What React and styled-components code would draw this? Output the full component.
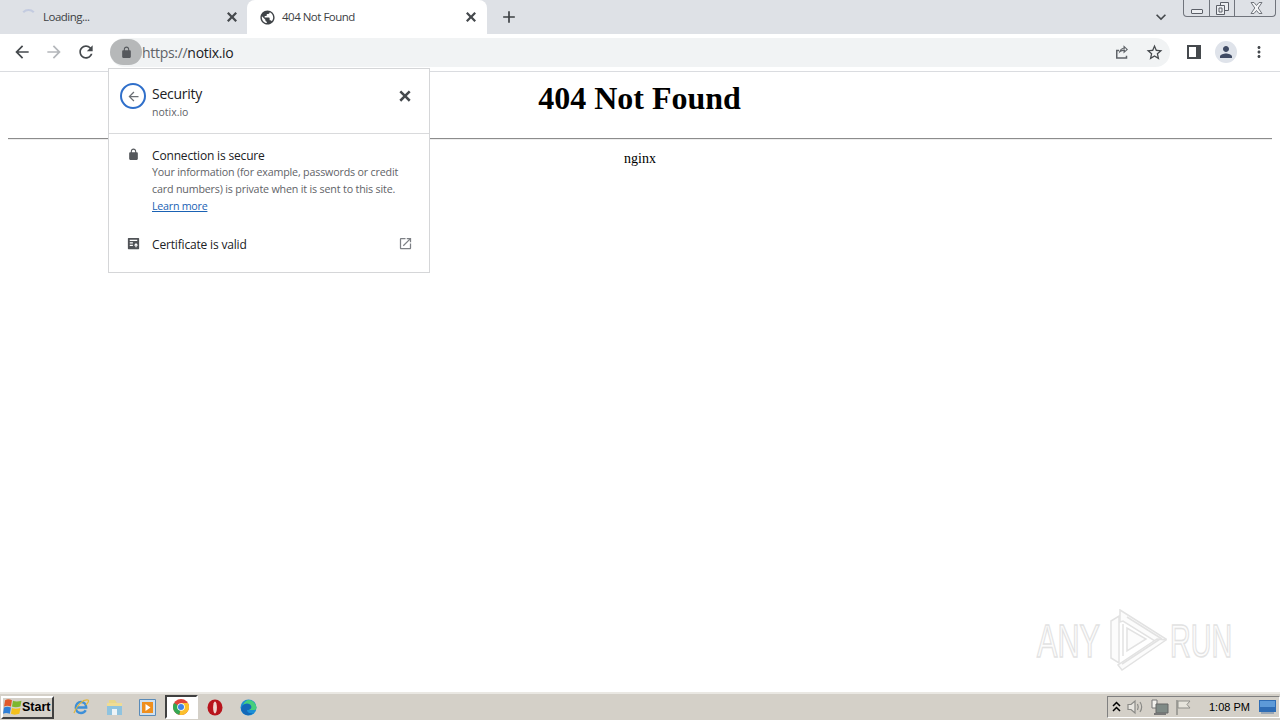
import React from 'react';
import styled, { createGlobalStyle } from 'styled-components';

const GlobalStyle = createGlobalStyle`
  html, body { margin: 0; padding: 0; height: 100%; background: #fff; overflow: hidden; }
  * { box-sizing: border-box; }
`;

const UI_FONT = `"Open Sans", "Noto Sans", sans-serif`;

const paths = {
  back: 'M20 11H7.83l5.59-5.59L12 4l-8 8 8 8 1.41-1.41L7.83 13H20v-2z',
  forward: 'M4 11h12.17l-5.59-5.59L12 4l8 8-8 8-1.41-1.41L16.17 13H4v-2z',
  reload: 'M17.65 6.35C16.2 4.9 14.21 4 12 4c-4.42 0-7.99 3.58-7.99 8s3.57 8 7.99 8c3.73 0 6.84-2.55 7.73-6h-2.08c-.82 2.33-3.04 4-5.65 4-3.31 0-6-2.69-6-6s2.69-6 6-6c1.66 0 3.14.69 4.22 1.78L13 11h7V4l-2.35 2.35z',
  close: 'M19.500 6.910 17.090 4.500 12 9.590 6.910 4.500 4.500 6.910 9.590 12 4.500 17.090 6.910 19.500 12 14.410 17.090 19.500 19.500 17.090 14.410 12z',
  plus: 'M19 13h-6v6h-2v-6H5v-2h6V5h2v6h6v2z',
  chevron: 'M7.41 8.59 12 13.17l4.59-4.58L18 10l-6 6-6-6z',
  lock: 'M18 8h-1V6c0-2.76-2.24-5-5-5S7 3.24 7 6v2H6c-1.1 0-2 .9-2 2v10c0 1.1.9 2 2 2h12c1.1 0 2-.9 2-2V10c0-1.1-.9-2-2-2zM9 6c0-1.66 1.34-3 3-3s3 1.34 3 3v2H9V6z',
  globe: 'M12 2C6.48 2 2 6.48 2 12s4.48 10 10 10 10-4.48 10-10S17.52 2 12 2zm-1 17.93c-3.95-.49-7-3.85-7-7.93 0-.62.08-1.21.21-1.79L9 15v1c0 1.1.9 2 2 2v1.93zm6.9-2.54c-.26-.81-1-1.39-1.9-1.39h-1v-3c0-.55-.45-1-1-1H8v-2h2c.55 0 1-.45 1-1V7h2c1.1 0 2-.9 2-2v-.41c2.93 1.19 5 4.06 5 7.41 0 2.08-.8 3.97-2.1 5.39z',
  star: 'M22 9.24l-7.19-.62L12 2 9.19 8.63 2 9.24l5.46 4.73L5.82 21 12 17.27 18.18 21l-1.63-7.03L22 9.24zM12 15.4l-3.76 2.27 1-4.28-3.32-2.88 4.38-.38L12 6.1l1.71 4.04 4.38.38-3.32 2.88 1 4.28L12 15.4z',
  openNew: 'M19 19H5V5h7V3H5c-1.11 0-2 .9-2 2v14c0 1.1.89 2 2 2h14c1.1 0 2-.9 2-2v-7h-2v7zM14 3v2h3.59l-9.83 9.83 1.41 1.41L19 6.41V10h2V3h-7z',
  person: 'M12 12c2.21 0 4-1.79 4-4s-1.79-4-4-4-4 1.79-4 4 1.79 4 4 4zm0 2c-2.67 0-8 1.34-8 4v2h16v-2c0-2.66-5.33-4-8-4z',
  dots: 'M12 8c1.1 0 2-.9 2-2s-.9-2-2-2-2 .9-2 2 .9 2 2 2zm0 2c-1.1 0-2 .9-2 2s.9 2 2 2 2-.9 2-2-.9-2-2-2zm0 6c-1.1 0-2 .9-2 2s.9 2 2 2 2-.9 2-2-.9-2-2-2z',
  share: 'M4 9v12h15v-4h-2v2H6v-8h2V9H4zm10-6v3.2C10.2 6.9 8 9.7 7.6 14.4c1.7-2.6 3.700-3.600 6.400-3.700V14l6-5.500L14 3zm2 3.600 1.900 1.900L16 10.200V8.800h-2c-1.300.1-2.400.4-3.400 1 .8-1.200 2-1.900 3.700-2.100l1.700-.2V6.600z',
  certificate: 'M4 3h16a1 1 0 0 1 1 1v16a1 1 0 0 1-1 1H4a1 1 0 0 1-1-1V4a1 1 0 0 1 1-1zm2 3v2h12V6H6zm0 4v2h5v-2H6zm0 4v2h5v-2H6zm10-3-3.500 4H15v3h2v-3h2.500L16 11z',
};

const Svg = styled.svg`
  display: block;
  flex: none;
  width: ${p => p.$size || 16}px;
  height: ${p => p.$size || 16}px;
  fill: ${p => p.$color || '#45494d'};
`;

const Icon = ({ name, size, color }) => (
  <Svg viewBox="0 0 24 24" $size={size} $color={color}>
    <path d={paths[name]} />
  </Svg>
);

const Screen = styled.div`
  width: 1280px;
  height: 720px;
  display: flex;
  flex-direction: column;
  position: relative;
  overflow: hidden;
  background: #fff;
`;

const TabStrip = styled.div`
  height: 34px;
  flex: none;
  display: flex;
  background: #dee1e6;
  font-family: ${UI_FONT};
  font-size: 11.5px;
  letter-spacing: -0.5px;
  color: #3c4043;
`;

const Tab = styled.div`
  width: ${p => p.$width}px;
  height: 34px;
  display: flex;
  align-items: center;
  padding: ${p => p.$padding};
  background: ${p => (p.$active ? '#fff' : 'transparent')};
  border-radius: 8px 8px 0 0;
`;

const TabTitle = styled.span`
  flex: 1;
  margin-left: ${p => p.$gap}px;
  padding-bottom: 1px;
`;

const Spinner = styled.span`
  width: 17px;
  height: 17px;
  flex: none;
  border-radius: 50%;
  border: 2px solid transparent;
  border-top-color: #c3cbe0;
`;

const NewTab = styled.div`
  width: 44px;
  display: flex;
  align-items: center;
  justify-content: center;
`;

const StripEnd = styled.div`
  margin-left: auto;
  display: flex;
  align-items: flex-start;
  padding-right: 4px;
`;

const TabSearch = styled.div`
  height: 34px;
  margin-right: 12px;
  display: flex;
  align-items: center;
`;

const WindowControls = styled.div`
  width: 93px;
  height: 17px;
  display: grid;
  grid-template-columns: 25px 25px 43px;
  border: 1px solid #70747c;
  border-top: 0;
  border-radius: 0 0 4px 4px;
`;

const WindowButton = styled.div`
  display: flex;
  align-items: center;
  justify-content: center;
  border-left: ${p => (p.$first ? '0' : '1px solid #70747c')};
`;

const MinimizeGlyph = styled.span`
  width: 12px;
  height: 5px;
  margin-top: 6px;
  border: 1px solid #5c6068;
  border-radius: 1px;
  background: #eceef1;
`;

const Toolbar = styled.div`
  height: 38px;
  flex: none;
  display: flex;
  align-items: center;
  padding: 0 5px 1px 6px;
  background: #fff;
  border-bottom: 1px solid #dadce0;
`;

const ToolButton = styled.div`
  width: ${p => p.$width || 32}px;
  height: 32px;
  flex: none;
  display: flex;
  align-items: center;
  justify-content: center;
`;

const Omnibox = styled.div`
  flex: 1;
  height: 29px;
  margin: 0 8px;
  display: flex;
  align-items: center;
  background: #f1f3f4;
  border-radius: 15px;
`;

const LockPill = styled.div`
  width: 32px;
  height: 26px;
  flex: none;
  display: flex;
  align-items: center;
  justify-content: center;
  background: #b6b8b9;
  border-radius: 13px;
`;

const Url = styled.div`
  flex: 1;
  font-family: ${UI_FONT};
  font-size: 14px;
  letter-spacing: -0.3px;
  color: #5f6368;
`;

const UrlHost = styled.span`
  color: #202124;
`;

const Avatar = styled.div`
  width: 22px;
  height: 22px;
  display: flex;
  align-items: center;
  justify-content: center;
  border-radius: 50%;
  background: #dfe3ea;
`;

const SidePanelGlyph = styled.span`
  width: 14px;
  height: 14px;
  border: 2px solid #45494d;
  border-right-width: 5px;
`;

const Page = styled.main`
  flex: 1;
  padding: 8px 8px 0;
  background: #fff;
  font-family: "Liberation Serif", serif;
  font-size: 14px;
  color: #000;
`;

const Heading = styled.h1`
  margin: 0 0 21px;
  padding-right: 1px;
  font-size: 32px;
  line-height: 37px;
  font-weight: bold;
  text-align: center;
`;

const Rule = styled.hr`
  margin: 0 0 8px;
  height: 2px;
  border: 0;
  border-top: 1px solid #8c8c8c;
  border-bottom: 1px solid #eee;
`;

const ServerName = styled.div`
  line-height: 22px;
  text-align: center;
`;

const Popup = styled.section`
  position: absolute;
  left: 108px;
  top: 68px;
  width: 322px;
  height: 205px;
  background: #fff;
  border: 1px solid #d5d6d8;
  font-family: ${UI_FONT};
  color: #202124;
`;

const PopupHeader = styled.header`
  height: 65px;
  display: flex;
  align-items: flex-start;
  padding: 14px 15px 0 11px;
  border-bottom: 1px solid #d9dadc;
`;

const BackCircle = styled.div`
  width: 26px;
  height: 26px;
  flex: none;
  display: flex;
  align-items: center;
  justify-content: center;
  border: 2px solid #2f6fca;
  border-radius: 50%;
`;

const HeaderText = styled.div`
  flex: 1;
  margin-left: 6px;
  padding-top: 1px;
`;

const HeaderTitle = styled.div`
  font-size: 14px;
  line-height: 20px;
  letter-spacing: -0.25px;
`;

const HeaderSub = styled.div`
  font-size: 10.5px;
  line-height: 16px;
  color: #5f6368;
`;

const HeaderClose = styled.div`
  margin-top: 4px;
`;

const PopupRow = styled.div`
  display: flex;
  align-items: flex-start;
  padding: ${p => p.$padding};
`;

const RowIcon = styled.div`
  width: 16px;
  margin: 0 11px 0 16px;
  display: flex;
  justify-content: center;
  padding-top: ${p => p.$top || 0}px;
`;

const RowBody = styled.div`
  flex: 1;
`;

const RowTitle = styled.div`
  font-size: 12px;
  line-height: 17px;
  letter-spacing: -0.17px;
`;

const RowText = styled.p`
  margin: 0;
  font-size: 10.7px;
  line-height: 17px;
  letter-spacing: -0.17px;
  color: #5f6368;
  white-space: nowrap;
`;

const LearnMore = styled.a`
  display: block;
  font-size: 10.7px;
  line-height: 17px;
  letter-spacing: -0.25px;
  color: #1a62b4;
  text-decoration: underline;
`;

const Watermark = styled.div`
  position: absolute;
  left: 1037px;
  top: 609px;
  display: flex;
  align-items: center;
  font-family: "Liberation Sans", sans-serif;
  font-size: 47px;
  line-height: 62px;
  color: #fcfcfc;
  -webkit-text-stroke: 1.5px #e2e2e2;
`;

const WatermarkWord = styled.span`
  display: block;
  width: 62px;
  margin-bottom: 14px;
  transform: scaleX(${p => p.$scale});
  transform-origin: left center;
  white-space: nowrap;
`;

const WatermarkMark = styled.span`
  display: block;
  margin: 0 3px 0 11px;
`;

const Taskbar = styled.footer`
  height: 28px;
  flex: none;
  display: flex;
  align-items: center;
  background: #d4d0c8;
  border-top: 2px solid #eae8e3;
  font-family: "Liberation Sans", sans-serif;
`;

const StartButton = styled.div`
  width: 53px;
  height: 23px;
  margin-left: 1px;
  display: flex;
  align-items: center;
  font-size: 12.5px;
  font-weight: bold;
  color: #000;
  background: #d4d0c8;
  border: 2px solid;
  border-color: #fff #404040 #404040 #fff;
`;

const Launcher = styled.div`
  margin-left: 10px;
  display: flex;
  align-items: center;
`;

const LaunchSlot = styled.div`
  width: 33.5px;
  height: 24px;
  display: flex;
  align-items: center;
  justify-content: center;
  ${p => p.$active && `
    background: #fff;
    border: 2px solid;
    border-color: #404040 #fff #fff #404040;
  `}
`;

const Tray = styled.div`
  margin-left: auto;
  width: 173px;
  height: 22px;
  display: flex;
  align-items: center;
  border: 1px solid;
  border-color: #808080 #fff #fff #808080;
`;

const TrayIcons = styled.div`
  display: flex;
  align-items: center;
  gap: 6px;
  padding-left: 4px;
`;

const Clock = styled.span`
  margin-left: 16px;
  font-size: 11px;
  color: #000;
  white-space: nowrap;
`;

const DesktopSlot = styled.div`
  margin-left: auto;
  padding: 3px 3px 0 0;
`;

const WinFlag = () => (
  <svg width="19" height="18" viewBox="0 0 18 17">
    <path d="M2 2c2-1 4-1 6.500 0L7.500 8C5 7 3 7 1 8z" fill="#e0592a" />
    <path d="M9.500 2.500c2 1 5 1 8 0L16.500 8c-3 1-6 1-8 0z" fill="#7db72f" />
    <path d="M1 9c2-1 4-1 6.500 0l-1 6c-2.500-1-4.500-1-6.500 0z" fill="#2f7fd6" />
    <path d="M8.500 9.500c2 1 5 1 8 0l-1 5.500c-3 1-6 1-8 0z" fill="#f3c01c" />
  </svg>
);

const IeIcon = () => (
  <svg width="18" height="18" viewBox="0 0 18 18" fill="none">
    <path d="M3.800 9.500h10.400c0-3.200-2.300-5.500-5.200-5.500s-5.200 2.500-5.200 5.700 2.300 5.300 5.200 5.300c2.200 0 3.800-1 4.700-2.700" stroke="#3d8fd8" strokeWidth="2.400" />
    <path d="M2 15C5 7 11 1 16 2c1.500 1-.5 3-2 5" stroke="#e3b73b" strokeWidth="1.200" />
  </svg>
);

const FolderIcon = () => (
  <svg width="17" height="18" viewBox="0 0 17 18">
    <path d="M3 2h6l2 3H3z" fill="#e9d78a" />
    <path d="M1 5h15v12H1z" fill="#8fc3df" />
    <path d="M1 5h15v3H1z" fill="#f0dc94" />
    <path d="M6 11h5v6H6z" fill="#eef4f7" />
  </svg>
);

const MediaIcon = () => (
  <svg width="17" height="17" viewBox="0 0 17 17">
    <path d="M.5.5h16v16H.5z" fill="#cfe0ef" stroke="#5a8bb8" />
    <path d="M3 3h11v11H3z" fill="#ef8f1e" />
    <path d="M6.500 5l5 3.500-5 3.500z" fill="#fff" />
  </svg>
);

const ChromeIcon = () => (
  <svg width="16" height="16" viewBox="0 0 16 16">
    <circle cx="8" cy="8" r="8" fill="#e0443a" />
    <path d="M8 8 1.070 4A8 8 0 0 0 6.500 15.860z" fill="#34a853" />
    <path d="M8 8 6.500 15.860A8 8 0 0 0 14.930 4H8z" fill="#fbc02d" />
    <circle cx="8" cy="8" r="3.800" fill="#fff" />
    <circle cx="8" cy="8" r="3" fill="#3f83e8" />
  </svg>
);

const OperaIcon = () => (
  <svg width="16" height="17" viewBox="0 0 16 17">
    <ellipse cx="8" cy="8.500" rx="7.500" ry="8" fill="#b8141c" />
    <ellipse cx="8" cy="8.500" rx="1.900" ry="6" fill="#f0d6d0" />
  </svg>
);

const EdgeIcon = () => (
  <svg width="17" height="17" viewBox="0 0 17 17">
    <circle cx="8.500" cy="8.500" r="8" fill="#1b8fd6" />
    <path d="M1 10C2 5 7 3 11 5c3 1.500 4 4 3 6H7c0 2 2 4 6 3-2 2-5 3-8 1.500C3 14.500 1.500 12.500 1 10z" fill="#1468b8" />
    <path d="M9 1c4 .5 7 3.500 7.500 7.500 0 1-.5 2.500-2.500 2.500H9c3-1 3-4 1-5.500C8 4 5 4.500 3 6c1-3 3.500-5 6-5z" fill="#45cf7c" />
  </svg>
);

const RestoreGlyph = () => (
  <svg width="13" height="13" viewBox="0 0 13 13" fill="#eceef1" stroke="#5c6068">
    <path d="M4.500.5h8v8h-8z" />
    <path d="M.5 3.500h8v9h-8z" />
    <path d="M3 6h3v4H3z" />
  </svg>
);

const CloseGlyph = () => (
  <svg width="13" height="12" viewBox="0 0 13 12" fill="#f3f4f6" stroke="#71757c">
    <path d="M1 .5h3L6.500 3.500 9 .5h3L8.200 6l3.800 5.500H9L6.500 8.500 4 11.500H1L4.800 6z" />
  </svg>
);

const TrayArrows = () => (
  <svg width="9" height="12" viewBox="0 0 9 12" fill="none" stroke="#000" strokeWidth="1.500">
    <path d="M1 5l3.500-3.500L8 5M1 10l3.500-3.500L8 10" />
  </svg>
);

const SpeakerIcon = () => (
  <svg width="18" height="16" viewBox="0 0 18 16" fill="none" stroke="#8a8a86" strokeWidth="1.200">
    <path d="M1 5.500h3L8 2v12l-4-3.500H1z" fill="#e8e6e0" />
    <path d="M10.500 5c1 2 1 4 0 6M13 3c2 3 2 7 0 10" />
  </svg>
);

const NetworkIcon = () => (
  <svg width="18" height="17" viewBox="0 0 18 17">
    <path d="M1 1h5v8H1z" fill="#f4f3ee" stroke="#777" />
    <path d="M5 5h12v9H5z" fill="#7f8a86" stroke="#666" />
    <path d="M3 15h12" stroke="#777" strokeWidth="2" />
  </svg>
);

const FlagIcon = () => (
  <svg width="18" height="17" viewBox="0 0 18 17" fill="none" stroke="#8f8f8a">
    <path d="M2 1v15" strokeWidth="1.500" />
    <path d="M3 2h12l-3 3.500 3 3.500H3z" fill="#e6e4dc" />
  </svg>
);

const DesktopIcon = () => (
  <svg width="17" height="16" viewBox="0 0 17 16">
    <path d="M0 1h17v12H0z" fill="#2f6db5" />
    <path d="M1 2h15v6H1z" fill="#5d9ad8" />
    <path d="M2 13h13v2H2z" fill="#9aa7b5" />
  </svg>
);

const WatermarkLogo = () => (
  <svg width="57" height="62" viewBox="0 0 57 62" fill="#fcfcfc" stroke="#e2e2e2" strokeWidth="1.500">
    <path d="M1 12 9 7v47l-8-5z" />
    <path d="M10 1l46 29-8 4L13 12l-3 1z" />
    <path d="M56 31 12 61l-4-5 39-26z" />
    <path d="M17 19v23l19-12z" />
    <path d="M13 15v32" />
    <path d="M17 8l35 22" />
    <path d="M12 55l38-25" />
  </svg>
);

const App = () => (
  <Screen>
    <GlobalStyle />
    <TabStrip>
      <Tab $width={247} $padding="0 7px 0 20px">
        <Spinner />
        <TabTitle $gap={6}>Loading...</TabTitle>
        <Icon name="close" size={16} />
      </Tab>
      <Tab $active $width={240} $padding="0 8px 0 12px">
        <Icon name="globe" size={17} color="#3f4347" />
        <TabTitle $gap={6}>404 Not Found</TabTitle>
        <Icon name="close" size={16} />
      </Tab>
      <NewTab>
        <Icon name="plus" size={20} color="#3c4043" />
      </NewTab>
      <StripEnd>
        <TabSearch>
          <Icon name="chevron" size={20} />
        </TabSearch>
        <WindowControls>
          <WindowButton $first><MinimizeGlyph /></WindowButton>
          <WindowButton><RestoreGlyph /></WindowButton>
          <WindowButton><CloseGlyph /></WindowButton>
        </WindowControls>
      </StripEnd>
    </TabStrip>

    <Toolbar>
      <ToolButton><Icon name="back" size={20} /></ToolButton>
      <ToolButton><Icon name="forward" size={20} color="#b4b7bb" /></ToolButton>
      <ToolButton><Icon name="reload" size={20} /></ToolButton>
      <Omnibox>
        <LockPill><Icon name="lock" size={13} color="#55585c" /></LockPill>
        <Url>https://<UrlHost>notix.io</UrlHost></Url>
        <ToolButton><Icon name="share" size={18} color="#5f6368" /></ToolButton>
        <ToolButton><Icon name="star" size={19} /></ToolButton>
      </Omnibox>
      <ToolButton><SidePanelGlyph /></ToolButton>
      <ToolButton><Avatar><Icon name="person" size={18} color="#3f4a63" /></Avatar></ToolButton>
      <ToolButton $width={33}><Icon name="dots" size={18} /></ToolButton>
    </Toolbar>

    <Page>
      <Heading>404 Not Found</Heading>
      <Rule />
      <ServerName>nginx</ServerName>
    </Page>

    <Popup>
      <PopupHeader>
        <BackCircle><Icon name="back" size={15} color="#6b6f74" /></BackCircle>
        <HeaderText>
          <HeaderTitle>Security</HeaderTitle>
          <HeaderSub>notix.io</HeaderSub>
        </HeaderText>
        <HeaderClose><Icon name="close" size={18} /></HeaderClose>
      </PopupHeader>
      <PopupRow $padding="13px 0 0">
        <RowIcon $top={1}><Icon name="lock" size={13} color="#55585c" /></RowIcon>
        <RowBody>
          <RowTitle>Connection is secure</RowTitle>
          <RowText>Your information (for example, passwords or credit</RowText>
          <RowText>card numbers) is private when it is sent to this site.</RowText>
          <LearnMore>Learn more</LearnMore>
        </RowBody>
      </PopupRow>
      <PopupRow $padding="21px 16px 0 0">
        <RowIcon><Icon name="certificate" size={15} color="#505357" /></RowIcon>
        <RowBody><RowTitle>Certificate is valid</RowTitle></RowBody>
        <Icon name="openNew" size={15} color="#7d8085" />
      </PopupRow>
    </Popup>

    <Watermark>
      <WatermarkWord $scale={0.65}>ANY</WatermarkWord>
      <WatermarkMark><WatermarkLogo /></WatermarkMark>
      <WatermarkWord $scale={0.61}>RUN</WatermarkWord>
    </Watermark>

    <Taskbar>
      <StartButton><WinFlag />Start</StartButton>
      <Launcher>
        <LaunchSlot><IeIcon /></LaunchSlot>
        <LaunchSlot><FolderIcon /></LaunchSlot>
        <LaunchSlot><MediaIcon /></LaunchSlot>
        <LaunchSlot $active><ChromeIcon /></LaunchSlot>
        <LaunchSlot><OperaIcon /></LaunchSlot>
        <LaunchSlot><EdgeIcon /></LaunchSlot>
      </Launcher>
      <Tray>
        <TrayIcons>
          <TrayArrows />
          <SpeakerIcon />
          <NetworkIcon />
          <FlagIcon />
        </TrayIcons>
        <Clock>1:08 PM</Clock>
        <DesktopSlot><DesktopIcon /></DesktopSlot>
      </Tray>
    </Taskbar>
  </Screen>
);

export default App;
